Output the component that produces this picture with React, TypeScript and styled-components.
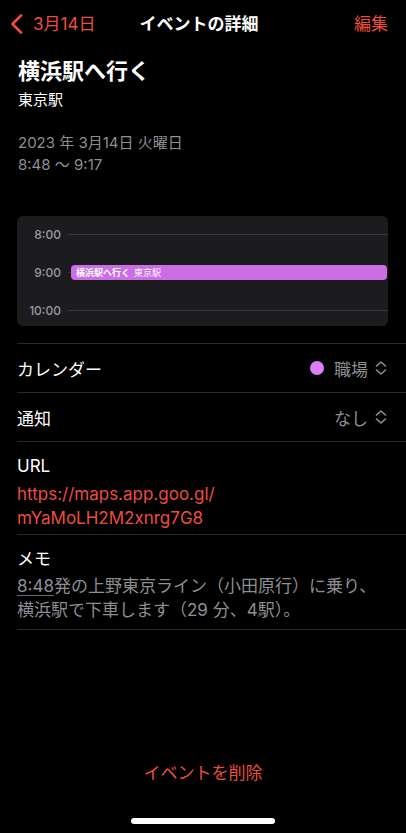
import React from 'react';
import styled, {createGlobalStyle} from 'styled-components';

const RED = '#eb4e3d';
const GRAY = '#8e8e93';
const SEPARATOR = '#2a2a2c';
const EVENT_PURPLE = '#cb6de5';
const CALENDAR_DOT = '#e07cf6';

const GlobalStyle = createGlobalStyle`
    html, body {
        margin: 0;
        padding: 0;
        background: #000;
    }

    body {
        font-family: 'Inter', 'Noto Sans CJK JP', sans-serif;
        color: #fff;
        -webkit-font-smoothing: antialiased;
    }
`;

const Screen = styled.div`
    width: 406px;
    height: 833px;
    display: flex;
    flex-direction: column;
    background: #000;
    overflow: hidden;
`;

const NavBar = styled.nav`
    height: 48px;
    display: grid;
    grid-template-columns: 1fr auto 1fr;
    align-items: center;
    padding: 0 18px 0 10px;
`;

const BackButton = styled.button`
    display: flex;
    align-items: center;
    gap: 10px;
    justify-self: start;
    padding: 0;
    border: none;
    background: none;
    color: ${RED};
    font: inherit;
    font-size: 17px;
    line-height: 22px;
`;

const NavTitle = styled.h1`
    margin: 0;
    font-size: 17px;
    font-weight: 600;
    line-height: 22px;
`;

const NavAction = styled.button`
    justify-self: end;
    padding: 0;
    border: none;
    background: none;
    color: ${RED};
    font: inherit;
    font-size: 17px;
    line-height: 22px;
`;

const Header = styled.header`
    padding: 9px 18px 0;
`;

const EventTitle = styled.h2`
    margin: 0;
    font-size: 22px;
    font-weight: 700;
    line-height: 28px;
`;

const Location = styled.div`
    margin-top: 5px;
    font-size: 15px;
    line-height: 20px;
`;

const When = styled.div`
    margin-top: 22px;
    color: ${GRAY};
    font-size: 15px;
    line-height: 22px;
`;

const DayCard = styled.div`
    margin: 40px 18px 0 17px;
    padding: 8px 0 6px;
    display: flex;
    flex-direction: column;
    gap: 18px;
    background: #1c1c1e;
    border-radius: 6px;
`;

const HourRow = styled.div`
    height: 20px;
    display: grid;
    grid-template-columns: 44px 1fr;
    column-gap: 7px;
    align-items: center;
`;

const HourLabel = styled.span`
    text-align: right;
    color: #9a9aa0;
    font-size: 12px;
    font-weight: 500;
`;

const HourTrack = styled.div`
    height: 100%;
    display: flex;
    align-items: center;
    background: linear-gradient(#38383a, #38383a) no-repeat center / 100% 1px;
`;

const EventBar = styled.div`
    flex: 1;
    height: 15px;
    margin: 0 1px 0 3px;
    padding: 0 5px;
    display: flex;
    align-items: center;
    gap: 4px;
    background: ${EVENT_PURPLE};
    border-radius: 4px;
    font-size: 9px;
    line-height: 15px;
    white-space: nowrap;
`;

const EventBarTitle = styled.span`
    font-weight: 700;
`;

const Details = styled.section`
    margin: 17px 0 0 17px;
`;

const Row = styled.div`
    height: 48px;
    display: flex;
    align-items: center;
    justify-content: space-between;
    padding-right: 19px;
    border-top: 1px solid ${SEPARATOR};
    font-size: 17px;
`;

const RowValue = styled.div`
    display: flex;
    align-items: center;
    color: ${GRAY};
`;

const Dot = styled.span<{color: string}>`
    width: 14px;
    height: 14px;
    margin-right: 10px;
    border-radius: 50%;
    background: ${({color}) => color};
`;

const Block = styled.div<{top: number; bottom: number}>`
    padding: ${({top}) => top}px 19px ${({bottom}) => bottom}px 0;
    border-top: 1px solid ${SEPARATOR};
    font-size: 17px;

    &:last-child {
        border-bottom: 1px solid ${SEPARATOR};
    }
`;

const BlockLabel = styled.div`
    line-height: 22px;
`;

const Link = styled.a`
    display: block;
    margin-top: 5px;
    color: ${RED};
    line-height: 24px;
    text-decoration: none;
`;

const Memo = styled.p`
    margin: 4px 0 0;
    color: ${GRAY};
    line-height: 24px;
`;

const TimeLink = styled.span`
    text-decoration: underline;
    text-decoration-color: #6a6a6e;
    text-underline-offset: 3px;
`;

const Footer = styled.footer`
    margin-top: auto;
    display: flex;
    flex-direction: column;
    align-items: center;
    padding-bottom: 9px;
`;

const DeleteButton = styled.button`
    padding: 0;
    border: none;
    background: none;
    color: ${RED};
    font: inherit;
    font-size: 17px;
    line-height: 22px;
`;

const HomeIndicator = styled.div`
    width: 144px;
    height: 6px;
    margin-top: 34px;
    background: #fff;
    border-radius: 3px;
`;

const BackChevron = () => (
    <svg width='13' height='20' viewBox='0 0 13 20' fill='none'>
        <path d='M11 1.5L2.5 10L11 18.5' stroke={RED} strokeWidth='2.6' strokeLinecap='round' strokeLinejoin='round' />
    </svg>
);

const UpDownChevron = () => (
    <svg width='12' height='14' viewBox='0 0 12 14' fill='none' style={{marginLeft: 7}}>
        <path d='M1.5 5L6 1L10.5 5M1.5 9L6 13L10.5 9' stroke={GRAY} strokeWidth='1.6' strokeLinecap='round' strokeLinejoin='round' />
    </svg>
);

const hours = ['8:00', '9:00', '10:00'];

export default function App() {
    return (
        <Screen>
            <GlobalStyle />
            <NavBar>
                <BackButton>
                    <BackChevron />
                    3月14日
                </BackButton>
                <NavTitle>イベントの詳細</NavTitle>
                <NavAction>編集</NavAction>
            </NavBar>

            <Header>
                <EventTitle>横浜駅へ行く</EventTitle>
                <Location>東京駅</Location>
                <When>
                    2023 年 3月14日 火曜日
                    <br />
                    8:48 ～ 9:17
                </When>
            </Header>

            <DayCard>
                {hours.map(hour => (
                    <HourRow key={hour}>
                        <HourLabel>{hour}</HourLabel>
                        <HourTrack>
                            {hour === '9:00' && (
                                <EventBar>
                                    <EventBarTitle>横浜駅へ行く</EventBarTitle>
                                    <span>東京駅</span>
                                </EventBar>
                            )}
                        </HourTrack>
                    </HourRow>
                ))}
            </DayCard>

            <Details>
                <Row>
                    <span>カレンダー</span>
                    <RowValue>
                        <Dot color={CALENDAR_DOT} />
                        職場
                        <UpDownChevron />
                    </RowValue>
                </Row>
                <Row>
                    <span>通知</span>
                    <RowValue>
                        なし
                        <UpDownChevron />
                    </RowValue>
                </Row>
                <Block top={13} bottom={4}>
                    <BlockLabel>URL</BlockLabel>
                    <Link href='#'>
                        https://maps.app.goo.gl/
                        <br />
                        mYaMoLH2M2xnrg7G8
                    </Link>
                </Block>
                <Block top={13} bottom={7}>
                    <BlockLabel>メモ</BlockLabel>
                    <Memo>
                        <TimeLink>8:48</TimeLink>発の上野東京ライン（小田原行）に乗り、
                        <br />
                        横浜駅で下車します（29 分、4駅）。
                    </Memo>
                </Block>
            </Details>

            <Footer>
                <DeleteButton>イベントを削除</DeleteButton>
                <HomeIndicator />
            </Footer>
        </Screen>
    );
}
